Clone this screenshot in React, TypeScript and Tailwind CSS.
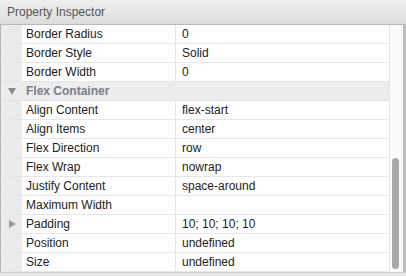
import React from "react";

type Row =
  | { kind: "prop"; name: string; value: string; expandable?: boolean }
  | { kind: "section"; name: string };

const ROWS: Row[] = [
  { kind: "prop", name: "Border Radius", value: "0" },
  { kind: "prop", name: "Border Style", value: "Solid" },
  { kind: "prop", name: "Border Width", value: "0" },
  { kind: "section", name: "Flex Container" },
  { kind: "prop", name: "Align Content", value: "flex-start" },
  { kind: "prop", name: "Align Items", value: "center" },
  { kind: "prop", name: "Flex Direction", value: "row" },
  { kind: "prop", name: "Flex Wrap", value: "nowrap" },
  { kind: "prop", name: "Justify Content", value: "space-around" },
  { kind: "prop", name: "Maximum Width", value: "" },
  { kind: "prop", name: "Padding", value: "10; 10; 10; 10", expandable: true },
  { kind: "prop", name: "Position", value: "undefined" },
  { kind: "prop", name: "Size", value: "undefined" },
];

function Triangle({ open }: { open: boolean }) {
  return (
    <svg width="8" height="8" viewBox="0 0 8 8" className="shrink-0">
      {open ? (
        <path d="M0 1 L8 1 L4 8 Z" fill="#8c8c8c" />
      ) : (
        <path d="M1 0 L8 4 L1 8 Z" fill="#9a9a9a" />
      )}
    </svg>
  );
}

function PropRow({ row }: { row: Extract<Row, { kind: "prop" }> }) {
  return (
    <div className="flex h-[19px] border-b border-[#e6e6e6] bg-white">
      <div className="w-[21px] shrink-0 bg-[#ebebeb] flex items-center pl-[7px]">
        {row.expandable && <Triangle open={false} />}
      </div>
      <div className="w-[154px] shrink-0 border-r border-[#e2e2e2] pl-[4px] flex items-center text-[#222]">
        {row.name}
      </div>
      <div className="flex-1 pl-[6px] flex items-center text-[#222]">{row.value}</div>
    </div>
  );
}

function SectionRow({ name }: { name: string }) {
  return (
    <div className="flex h-[19px] border-b border-[#e2e2e2] bg-[#ececec] items-center">
      <div className="w-[21px] shrink-0 flex items-center pl-[7px]">
        <Triangle open />
      </div>
      <div className="pl-[4px] font-bold text-[#76808e]">{name}</div>
    </div>
  );
}

export default function App() {
  return (
    <div
      className="w-[406px] h-[276px] flex flex-col bg-[#e8e8e8] text-[12px] overflow-hidden"
      style={{ fontFamily: '"Liberation Sans", Arial, sans-serif' }}
    >
      {/* Title bar */}
      <div className="h-[25px] shrink-0 flex items-center px-[7px] border-b border-[#b9b9b9] bg-gradient-to-b from-[#efefef] to-[#dcdcdc] text-[#555]">
        Property Inspector
      </div>

      {/* Body */}
      <div className="flex h-[247px] shrink-0">
        <div className="w-[1px] bg-[#b4b4b4]" />
        <div className="flex-1 flex flex-col">
          {ROWS.map((row, i) =>
            row.kind === "section" ? (
              <SectionRow key={i} name={row.name} />
            ) : (
              <PropRow key={i} row={row} />
            )
          )}
        </div>
        {/* Scrollbar */}
        <div className="w-[12px] shrink-0 bg-[#fafafa] border-l border-[#e3e3e3] flex flex-col items-center pt-[133px]">
          <div className="w-[7px] h-[111px] rounded-full bg-[#a9a9a9]" />
        </div>
        <div className="w-[2px] bg-[#f3f3f3]" />
        <div className="w-[3px] bg-[#bdbdbd]" />
      </div>

      {/* Bottom edge */}
      <div className="h-[4px] shrink-0 border-t border-[#d0d0d0] bg-[#e6e6e6]" />
    </div>
  );
}
